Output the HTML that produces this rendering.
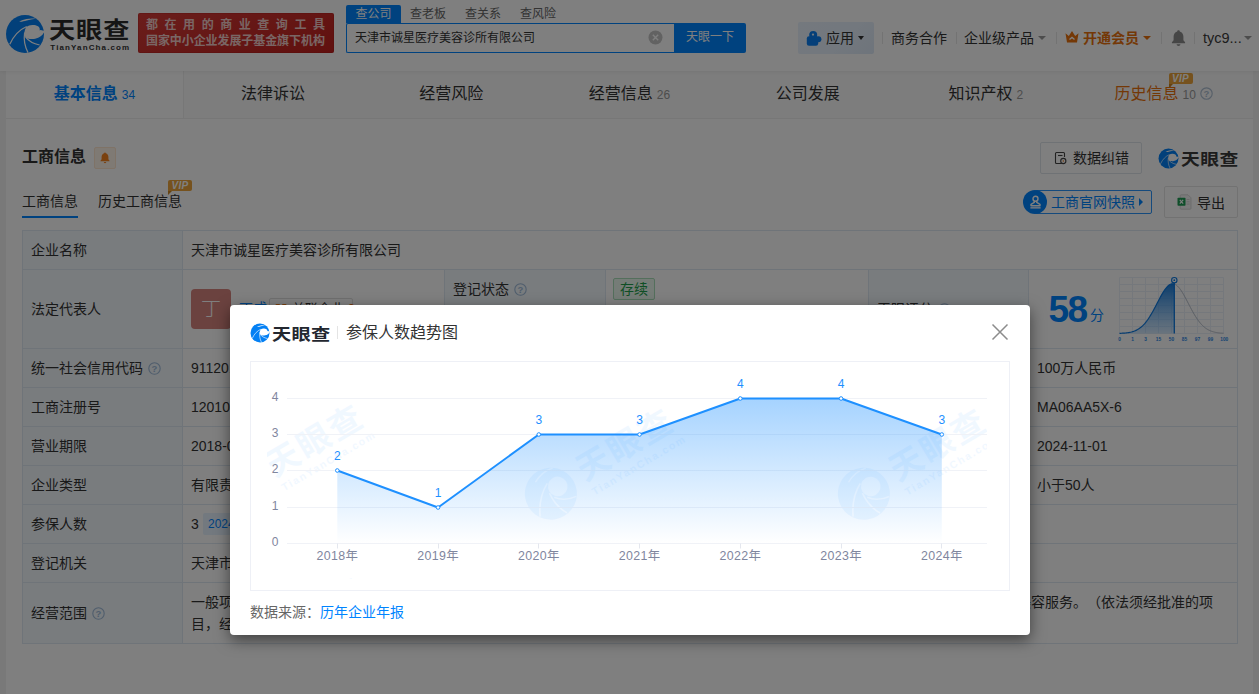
<!DOCTYPE html>
<html lang="zh-CN">
<head>
<meta charset="utf-8">
<title>天津市诚星医疗美容诊所有限公司 - 天眼查</title>
<style>
*{box-sizing:border-box;margin:0;padding:0}
html,body{width:1259px;height:694px;overflow:hidden;background:#f3f3f3;}
body{font-family:"Liberation Sans","Noto Sans CJK SC",sans-serif;color:#333;font-size:14px;position:relative}
.abs{position:absolute;white-space:nowrap}
svg{display:block}
/* header */
#hd{position:absolute;left:0;top:0;width:1259px;height:71px;background:#fff;box-shadow:0 1px 4px rgba(0,0,0,.07);z-index:2}
#hd .logo-t{left:48.500px;top:11px;font-size:22.500px;font-weight:700;color:#2b2b2b;letter-spacing:.8px;line-height:34px;font-family:"Noto Sans CJK SC",sans-serif;transform:scaleX(1.163);transform-origin:0 0}
#hd .logo-s{left:50.300px;top:41.500px;font-size:8px;font-weight:700;color:#333;letter-spacing:1.120px;line-height:12px}
#banner{left:138px;top:13px;width:196px;height:40px;background:linear-gradient(160deg,#d53c38,#c1201d);border-radius:2px;color:#f3cdca;font-weight:700;font-size:12px;box-shadow:0 0 0 1px rgba(160,20,20,.25) inset}
#banner div{position:absolute;left:8px;white-space:nowrap;line-height:16px}
.stab{top:5px;height:18px;line-height:19px;font-size:12px;color:#666}
#sinput{left:346px;top:23px;width:329px;height:30px;border:1px solid #0084ff;border-right:none;background:#fff;border-radius:2px 0 0 2px;font-size:12px;line-height:28px;padding-left:8px;color:#333}
#sbtn{left:674px;top:23px;width:72px;height:30px;background:#0084ff;color:#fff;font-size:12px;line-height:29px;text-align:center;border-radius:0 2px 2px 0}
.hsep{top:32px;width:1px;height:12px;background:#e6e6e6}
.hitem{top:27px;line-height:22px;font-size:14px;color:#333}
.caret{width:0;height:0;border-left:4px solid transparent;border-right:4px solid transparent;border-top:4px solid #999}
/* nav */
#wrap{position:absolute;left:6px;top:71px;width:1247px;height:640px;background:#fff}
.ntab{position:absolute;top:0;height:48px;width:178.140px;background:#fbfbfb;border-bottom:1px solid #efefef;text-align:center;line-height:45px;font-size:16px;color:#333;white-space:nowrap}
.ntab small{font-size:12px;color:#999;margin-left:4px}
.ntab.on{background:#fff;border-right:1px solid #efefef;color:#0084ff;font-weight:700}
.ntab.on small{color:#0084ff;font-weight:400}

.vip{width:24px;height:11px;background:#eca53c;color:#fff;font-size:10px;font-weight:700;font-style:italic;line-height:11px;text-align:center;border-radius:2px 2px 2px 0;letter-spacing:.3px;font-family:"Liberation Sans",sans-serif}
.vip:after{content:"";position:absolute;left:0;top:11px;border-top:4px solid #c98522;border-right:4px solid transparent}
.btn{border:1px solid #e4e4e4;border-radius:2px;background:#fff}
#tb{position:absolute;left:16px;top:159px;width:1216px;height:414px;background:#fff}
#tb .lb{position:absolute;background:#f2f8fd}
#tb .hl{position:absolute;left:0;width:1216px;height:1px;background:#dfe9f3}
#tb .vl{position:absolute;width:1px;background:#dfe9f3}
#tb .tx{position:absolute;white-space:nowrap;font-size:14px;line-height:22px;color:#333}
#mask{position:absolute;left:0;top:0;width:1259px;height:694px;background:rgba(0,0,0,.5);z-index:10}
#modal{position:absolute;left:230px;top:305px;width:800px;height:330px;background:#fff;border-radius:4px;box-shadow:0 5px 15px rgba(0,0,0,.5);z-index:11}
#mlogo{left:41.500px;top:13.500px;font-size:16px;font-weight:700;line-height:28px;color:#23272f;font-family:"Noto Sans CJK SC",sans-serif;letter-spacing:.3px;transform:scaleX(1.2);transform-origin:0 0}
#mtitle{left:116px;top:15.500px;font-size:16px;line-height:24px;color:#333}
#cbox{position:absolute;left:20px;top:56px;width:760px;height:230px;border:1px solid #eef0f6;overflow:hidden}
#msrc{left:20px;top:296px;font-size:14px;line-height:22px;color:#666}
#msrc span{color:#0084ff}
</style>
</head>
<body>
<div id="hd">
  <svg class="abs" style="left:5px;top:14px" width="40" height="40" viewBox="0 0 40 40"><circle cx="20" cy="20" r="19" fill="#0480f4"/><path d="M34.700 16.500 C35 14.800 34.500 13.300 33 12.300 C31.300 11.200 29.300 10.800 27.400 10.900 C25.200 11 23 11.700 21.200 12.900 C20.200 14.800 19.500 16.800 19.300 19.500 C19.300 21 19.800 22.500 20.900 23.700 C22 24.500 23.300 24.800 24.700 24.900 C26.500 25.100 28.400 25.100 30.200 24.700 C32.300 24.300 34.200 23.500 35.700 22.300 C37 21.300 38.100 20.200 38.800 18.800 L39.600 17 L35.600 16 Z" fill="#fff"/><path d="M21.700 12.500 C14.800 15.500 8.800 21.500 4.800 30.200" stroke="#fff" stroke-width="1.250" fill="none"/><path d="M19.600 18.500 C18.600 25.500 19.800 32.500 23 38.600" stroke="#fff" stroke-width="1.250" fill="none"/><path d="M20.600 23.200 C23.500 27 28.500 29.800 34.600 31" stroke="#fff" stroke-width="1.250" fill="none"/><path d="M14.200 7.700 C16.500 6.300 19 5.400 21.500 4.900 C24.500 4.300 27.800 4.200 30.800 4.700 C27.500 5.200 24.500 5.700 21.800 6.500 C19 7.200 16.500 8 14.200 7.700Z" fill="#fff"/></svg>
  <div class="abs logo-t">天眼查</div>
  <div class="abs logo-s">TianYanCha.com</div>
  <div class="abs" id="banner">
    <div style="top:4px;letter-spacing:6.550px">都在用的商业查询工具</div>
    <div style="top:19.700px;letter-spacing:-.08px">国家中小企业发展子基金旗下机构</div>
  </div>
  <div class="abs stab" style="left:346px;width:55px;background:#0084ff;color:#fff;text-align:center;font-size:12px;border-radius:2px 2px 0 0">查公司</div>
  <div class="abs stab" style="left:410px">查老板</div>
  <div class="abs stab" style="left:465px">查关系</div>
  <div class="abs stab" style="left:520px">查风险</div>
  <div class="abs" id="sinput">天津市诚星医疗美容诊所有限公司</div>
  <svg class="abs" style="left:648px;top:30px" width="15" height="15" viewBox="0 0 15 15"><circle cx="7.5" cy="7.5" r="7" fill="#c4c4c4"/><path d="M4.8 4.8l5.4 5.4M10.2 4.8l-5.4 5.4" stroke="#fff" stroke-width="1.4"/></svg>
  <div class="abs" id="sbtn">天眼一下</div>

  <div class="abs" style="left:798px;top:22px;width:76px;height:32px;background:linear-gradient(135deg,#e9f2fd 0%,#e6f0fc 60%,#dde9f7 100%);border-radius:2px"></div>
  <svg class="abs" style="left:806px;top:30px" width="16" height="17" viewBox="0 0 16 17"><rect x=".8" y="6.200" width="11.400" height="9.600" rx="2.200" fill="#0a7ff2"/><circle cx="7.200" cy="5" r="4" fill="#0a7ff2"/><circle cx="12.400" cy="9.300" r="3" fill="#0a7ff2"/><circle cx="7" cy="4.600" r="1.150" fill="#e8f2fd"/><circle cx="3.400" cy="12.200" r="1.300" fill="#e8f2fd" opacity=".0"/></svg>
  <div class="abs hitem" style="left:826px;font-size:14px">应用</div>
  <div class="abs caret" style="left:858px;top:36px;border-top-color:#333;border-left-width:3.500px;border-right-width:3.500px"></div>
  <div class="abs hsep" style="left:882px"></div>
  <div class="abs hitem" style="left:891px">商务合作</div>
  <div class="abs hsep" style="left:956px"></div>
  <div class="abs hitem" style="left:964px">企业级产品</div>
  <div class="abs caret" style="left:1038px;top:36px"></div>
  <div class="abs hsep" style="left:1056px"></div>
  <svg class="abs" style="left:1065px;top:30px" width="14" height="14" viewBox="0 0 14 14"><path d="M0.5 3.2 L3.8 6 L7 1 L10.2 6 L13.5 3.2 L12 12.5 H2 Z" fill="#e8710d"/><path d="M4.5 9.6 L7 7.4 L9.5 9.6" stroke="#fff" stroke-width="1.3" fill="none"/></svg>
  <div class="abs hitem" style="left:1083px;color:#e8710d;font-weight:700">开通会员</div>
  <div class="abs caret" style="left:1143px;top:36px;border-top-color:#e8710d"></div>
  <div class="abs hsep" style="left:1161px"></div>
  <svg class="abs" style="left:1171px;top:29px" width="15" height="18" viewBox="0 0 15 18"><path d="M7.5 1.2c-.8 0-1.3.5-1.3 1.2C3.8 3.1 2.6 5.2 2.6 7.6v3.6L.9 13.3v.9h13.2v-.9l-1.7-2.1V7.6c0-2.4-1.2-4.5-3.6-5.2 0-.7-.5-1.2-1.3-1.2z" fill="#8d8d8d"/><path d="M5.6 15.3h3.8c0 1-.9 1.7-1.9 1.7s-1.9-.7-1.9-1.7z" fill="#8d8d8d"/></svg>
  <div class="abs hsep" style="left:1194px"></div>
  <div class="abs hitem" style="left:1203px;color:#3a3a3a;font-size:14.500px">tyc9...</div>
  <div class="abs caret" style="left:1244px;top:36px"></div>
</div>


<div id="wrap">

  <div class="ntab on" style="left:0;width:178px">基本信息<small>34</small></div>
  <div class="ntab" style="left:178px">法律诉讼</div>
  <div class="ntab" style="left:356.3px">经营风险</div>
  <div class="ntab" style="left:534.4px">经营信息<small>26</small></div>
  <div class="ntab" style="left:712.6px">公司发展</div>
  <div class="ntab" style="left:890.7px">知识产权<small>2</small></div>
  <div class="ntab" style="left:1068.8px;width:178.2px;color:#e8710d">历史信息<small>10</small><svg style="display:inline-block;vertical-align:-1px;margin-left:4.500px" width="13" height="13" viewBox="0 0 13 13"><circle cx="6.500" cy="6.500" r="5.700" fill="none" stroke="#aebfd2" stroke-width="1.150"/><text x="6.500" y="9.800" font-size="9.500" font-weight="700" text-anchor="middle" fill="#aebfd2" font-family="Liberation Sans,sans-serif">?</text></svg></div>
  <!-- section head (coords relative to #wrap: x-6, y-71) -->
  <div class="abs" style="left:16px;top:74px;font-size:16px;font-weight:700;line-height:24px;color:#333">工商信息</div>
  <div class="abs" style="left:88px;top:76px;width:22px;height:22px;background:#fff4e8;border:1px solid #ffe6cf;border-radius:2px"></div>
  <svg class="abs" style="left:94px;top:81px" width="10" height="12" viewBox="0 0 10 12"><path d="M5 .6c-.5 0-.8.3-.8.7C2.500 1.800 1.600 3.300 1.600 5v2.300L.5 8.700v.6h9v-.6L8.400 7.300V5c0-1.700-.9-3.200-2.600-3.700 0-.4-.3-.7-.8-.7z" fill="#f5821f"/><path d="M3.800 10.100h2.400c0 .7-.5 1.200-1.200 1.200s-1.200-.5-1.200-1.200z" fill="#f5821f"/></svg>
  <div class="abs" style="left:16px;top:119px;font-size:14px;line-height:22px;color:#333">工商信息</div>
  <div class="abs" style="left:16px;top:145px;width:56px;height:2px;background:#0084ff"></div>
  <div class="abs" style="left:92px;top:119px;font-size:14px;line-height:22px;color:#333">历史工商信息</div>
  <div class="abs vip" style="left:162px;top:109px">VIP</div>
  <div class="abs vip" style="left:1162.500px;top:1.500px">VIP</div>

  <div class="abs btn" style="left:1034px;top:71px;width:102px;height:32px;border-color:#dfe4ea"></div>
  <svg class="abs" style="left:1048px;top:80px" width="13" height="14" viewBox="0 0 13 14"><path d="M8.500 12.500H2.500a1 1 0 0 1-1-1V2.500a1 1 0 0 1 1-1h7a1 1 0 0 1 1 1V6" fill="none" stroke="#444" stroke-width="1.100"/><path d="M4 4.500h4.500" stroke="#444" stroke-width="1.100"/><circle cx="9.300" cy="10" r="2.600" fill="#fff" stroke="#444" stroke-width="1.100"/><circle cx="9.300" cy="10" r=".7" fill="#e8710d"/></svg>
  <div class="abs" style="left:1067px;top:76px;font-size:14px;line-height:22px;color:#333">数据纠错</div>
  <svg class="abs" style="left:1152px;top:77px" width="21" height="21" viewBox="0 0 40 40"><circle cx="20" cy="20" r="19" fill="#0480f4"/><path d="M34.700 16.500 C35 14.800 34.500 13.300 33 12.300 C31.300 11.200 29.300 10.800 27.400 10.900 C25.200 11 23 11.700 21.200 12.900 C20.200 14.800 19.500 16.800 19.300 19.500 C19.300 21 19.800 22.500 20.900 23.700 C22 24.500 23.300 24.800 24.700 24.900 C26.500 25.100 28.400 25.100 30.200 24.700 C32.300 24.300 34.200 23.500 35.700 22.300 C37 21.300 38.100 20.200 38.800 18.800 L39.600 17 L35.600 16 Z" fill="#fff"/><path d="M21.700 12.500 C14.800 15.500 8.800 21.500 4.800 30.200" stroke="#fff" stroke-width="1.250" fill="none"/><path d="M19.600 18.500 C18.600 25.500 19.800 32.500 23 38.600" stroke="#fff" stroke-width="1.250" fill="none"/><path d="M20.600 23.200 C23.500 27 28.500 29.800 34.600 31" stroke="#fff" stroke-width="1.250" fill="none"/><path d="M14.200 7.700 C16.500 6.300 19 5.400 21.500 4.900 C24.500 4.300 27.800 4.200 30.800 4.700 C27.500 5.200 24.500 5.700 21.800 6.500 C19 7.200 16.500 8 14.200 7.700Z" fill="#fff"/></svg>
  <div class="abs" style="left:1174.500px;top:73px;font-size:16px;font-weight:700;line-height:28px;color:#3a3a3a;font-family:'Noto Sans CJK SC',sans-serif;letter-spacing:.4px;transform:scaleX(1.175);transform-origin:0 0">天眼查</div>

  <div class="abs" style="left:1029px;top:119px;width:117px;height:24px;border:1px solid #2b95fb;border-radius:2px;background:#fff"></div>
  <div class="abs" style="left:1017px;top:119px;width:24px;height:24px;border-radius:50%;background:#0084ff"></div>
  <svg class="abs" style="left:1022.500px;top:123.500px" width="13" height="14" viewBox="0 0 13 14"><circle cx="6.500" cy="3.700" r="2.500" fill="none" stroke="#fff" stroke-width="1.400"/><path d="M5.300 6v1.400L2 9.300v1.500h9V9.300L7.700 7.400V6" fill="none" stroke="#fff" stroke-width="1.400" stroke-linejoin="round"/><path d="M1.400 12.800h10.200" stroke="#cfe5ff" stroke-width="1.700"/></svg>
  <div class="abs" style="left:1045px;top:120px;font-size:14px;line-height:22px;color:#0084ff">工商官网快照</div>
  <div class="abs" style="left:1133px;top:127px;width:0;height:0;border-top:4px solid transparent;border-bottom:4px solid transparent;border-left:4.500px solid #0084ff"></div>
  <div class="abs btn" style="left:1158px;top:115px;width:74px;height:32px"></div>
  <svg class="abs" style="left:1171px;top:123px" width="15" height="16" viewBox="0 0 15 16"><path d="M4 .8h7l3 3v10.600a.8.8 0 0 1-.8.800H4a.8.8 0 0 1-.8-.800V1.600A.8.8 0 0 1 4 .8z" fill="#f4f4f4" stroke="#cfcfcf" stroke-width=".8"/><path d="M9.500 5.500h3M9.500 7.800h3M9.500 10.100h3" stroke="#d0d0d0" stroke-width=".9"/><rect x=".5" y="3.800" width="8" height="8" rx=".8" fill="#1f9d55"/><path d="M2.800 5.900l3.400 3.800M6.200 5.900L2.800 9.700" stroke="#fff" stroke-width="1.200"/></svg>
  <div class="abs" style="left:1191px;top:120.500px;font-size:14px;line-height:22px;color:#333">导出</div>
  <!-- table: page x 22..1237, y 230..643 ; relative to wrap: left 16, top 159 -->
  <div id="tb">
    <!-- label column backgrounds -->
    <div class="lb" style="left:0;top:0;width:160px;height:413px"></div>
    <div class="lb" style="left:422px;top:39px;width:161px;height:313px"></div>
    <div class="lb" style="left:846px;top:39px;width:161px;height:235px"></div>
    <!-- horizontal lines -->
    <div class="hl" style="top:0"></div>
    <div class="hl" style="top:39px"></div>
    <div class="hl" style="top:78px;left:422px;width:424px"></div>
    <div class="hl" style="top:118px"></div>
    <div class="hl" style="top:157px"></div>
    <div class="hl" style="top:196px"></div>
    <div class="hl" style="top:235px"></div>
    <div class="hl" style="top:274px"></div>
    <div class="hl" style="top:313px"></div>
    <div class="hl" style="top:352px"></div>
    <div class="hl" style="top:413px"></div>
    <!-- vertical lines -->
    <div class="vl" style="left:0;top:0;height:414px"></div>
    <div class="vl" style="left:160px;top:0;height:414px"></div>
    <div class="vl" style="left:422px;top:39px;height:313px"></div>
    <div class="vl" style="left:583px;top:39px;height:313px"></div>
    <div class="vl" style="left:846px;top:39px;height:235px"></div>
    <div class="vl" style="left:1006px;top:39px;height:235px"></div>
    <div class="vl" style="left:1215px;top:0;height:414px"></div>
    <!-- labels col 1 -->
    <div class="tx" style="left:9px;top:9px">企业名称</div>
    <div class="tx" style="left:9px;top:68px">法定代表人</div>
    <div class="tx" style="left:9px;top:127px">统一社会信用代码</div>
    <svg class="abs q" style="left:126px;top:132px" width="13" height="13" viewBox="0 0 13 13"><circle cx="6.500" cy="6.500" r="5.700" fill="none" stroke="#9fbbd9" stroke-width="1.100"/><text x="6.500" y="9.800" font-size="9.500" font-weight="700" text-anchor="middle" fill="#9fbbd9" font-family="Liberation Sans,sans-serif">?</text></svg>
    <div class="tx" style="left:9px;top:166px">工商注册号</div>
    <div class="tx" style="left:9px;top:205px">营业期限</div>
    <div class="tx" style="left:9px;top:244px">企业类型</div>
    <div class="tx" style="left:9px;top:283px">参保人数</div>
    <div class="tx" style="left:9px;top:322px">登记机关</div>
    <div class="tx" style="left:9px;top:372px">经营范围</div>
    <svg class="abs q" style="left:70px;top:377px" width="13" height="13" viewBox="0 0 13 13"><circle cx="6.500" cy="6.500" r="5.700" fill="none" stroke="#9fbbd9" stroke-width="1.100"/><text x="6.500" y="9.800" font-size="9.500" font-weight="700" text-anchor="middle" fill="#9fbbd9" font-family="Liberation Sans,sans-serif">?</text></svg>
    <!-- values col 1 -->
    <div class="tx" style="left:169px;top:9px">天津市诚星医疗美容诊所有限公司</div>
    <div class="abs" style="left:169px;top:59px;width:40px;height:40px;border-radius:4px;background:#d7847f;color:#fff;font-size:20px;line-height:40px;text-align:center;font-weight:300">丁</div>
    <div class="tx" style="left:217px;top:67px;color:#0084ff">丁戌</div>
    <div class="abs" style="left:247px;top:68px;width:84px;height:22px;border:1px solid #e0e0e0;border-radius:2px;font-size:13px;line-height:20px;color:#333;padding-left:22px">关联企业 <span style="color:#e8710d">3</span></div>
    <svg class="abs" style="left:253px;top:73px" width="12" height="12" viewBox="0 0 12 12"><rect x=".5" y="1" width="4.500" height="4.500" rx="1" fill="#f5821f"/><rect x="7" y="1" width="4.500" height="4.500" rx="1" fill="#f5821f"/><rect x="3.700" y="7" width="4.500" height="4.500" rx="1" fill="#f5821f"/></svg>
    <div class="tx" style="left:169px;top:127px">91120116MA06AA5X65</div>
    <div class="tx" style="left:169px;top:166px">120104000409843</div>
    <div class="tx" style="left:169px;top:205px">2018-03-19 至 2048-03-18</div>
    <div class="tx" style="left:169px;top:244px">有限责任公司</div>
    <div class="tx" style="left:169px;top:283px">3</div>
    <div class="abs" style="left:181px;top:283px;height:22px;padding:0 5px;background:#e6f2ff;color:#0084ff;font-size:12px;line-height:22px;border-radius:2px">2024年报</div>
    <div class="tx" style="left:169px;top:322px">天津市滨海新区市场监督管理局</div>
    <div class="tx" style="left:169px;top:361px;white-space:nowrap;width:1030px;line-height:22px;text-spacing-trim:space-all;overflow:hidden">一般项目：医疗美容服务；第一类医疗器械销售；第二类医疗器械销售；化妆品零售；化妆品批发；健康咨询（不含诊疗服务）；生活美容服务。（依法须经批准的项<br>目，经相关部门批准后方可开展经营活动，具体经营项目以相关部门批准文件或许可证件为准）</div>
    <!-- col 2 -->
    <div class="tx" style="left:431px;top:48px">登记状态</div>
    <svg class="abs q" style="left:492px;top:53px" width="13" height="13" viewBox="0 0 13 13"><circle cx="6.500" cy="6.500" r="5.700" fill="none" stroke="#9fbbd9" stroke-width="1.100"/><text x="6.500" y="9.800" font-size="9.500" font-weight="700" text-anchor="middle" fill="#9fbbd9" font-family="Liberation Sans,sans-serif">?</text></svg>
    <div class="abs" style="left:591px;top:48px;width:42px;height:22px;border:1px solid #a9dfb9;background:#eaf8ee;color:#1e9e4a;font-size:14px;line-height:20px;text-align:center;border-radius:2px">存续</div>
    <div class="tx" style="left:431px;top:87px">成立日期</div>
    <div class="tx" style="left:431px;top:127px">注册资本</div>
    <div class="tx" style="left:431px;top:166px">纳税人识别号</div>
    <div class="tx" style="left:431px;top:205px">纳税人资质</div>
    <div class="tx" style="left:431px;top:244px">行业</div>
    <div class="tx" style="left:431px;top:283px">英文名称</div>
    <div class="tx" style="left:431px;top:322px">注册地址</div>
    <!-- col 3 -->
    <div class="tx" style="left:855px;top:68px">天眼评分</div>
    <svg class="abs q" style="left:916px;top:73px" width="13" height="13" viewBox="0 0 13 13"><circle cx="6.500" cy="6.500" r="5.700" fill="none" stroke="#9fbbd9" stroke-width="1.100"/><text x="6.500" y="9.800" font-size="9.500" font-weight="700" text-anchor="middle" fill="#9fbbd9" font-family="Liberation Sans,sans-serif">?</text></svg>
    <div class="tx" style="left:855px;top:127px">实缴资本</div>
    <div class="tx" style="left:855px;top:166px">组织机构代码</div>
    <div class="tx" style="left:855px;top:205px">核准日期</div>
    <div class="tx" style="left:855px;top:244px">人员规模</div>
    <div class="tx" style="left:1015px;top:127px">100万人民币</div>
    <div class="tx" style="left:1015px;top:166px">MA06AA5X-6</div>
    <div class="tx" style="left:1015px;top:205px">2024-11-01</div>
    <div class="tx" style="left:1015px;top:244px">小于50人</div>
    <!-- score -->
    <div class="abs" style="left:1026.500px;top:56.500px;font-size:37px;font-weight:700;color:#0084ff;line-height:46px;font-family:'Liberation Sans',sans-serif;letter-spacing:-1.500px">58</div>
    <div class="abs" style="left:1068px;top:76px;font-size:14px;color:#0084ff;line-height:18px">分</div>
<!--SC0-->
    <svg class="abs" style="left:1090px;top:42px" width="122" height="74" viewBox="0 0 122 74">
      <linearGradient id="sg" x1="0" y1="0" x2="0" y2="1"><stop offset="0" stop-color="#0b73d6" stop-opacity=".95"/><stop offset="1" stop-color="#3b97ee" stop-opacity=".22"/></linearGradient>
      <path d="M7.5 5.5V61.5M20.5 5.5V61.5M33.5 5.5V61.5M46.5 5.5V61.5M59.5 5.5V61.5M72.5 5.5V61.5M85.5 5.5V61.5M98.5 5.5V61.5M111.5 5.5V61.5M7.5 5.5H111.5M7.5 12.5H111.5M7.5 19.5H111.5M7.5 26.5H111.5M7.5 33.5H111.5M7.5 40.5H111.5M7.5 47.5H111.5M7.5 54.5H111.5M7.5 61.5H111.5" stroke="#eaf0f8" stroke-width="1" fill="none"/>
      <path d="M62.3 12.06 L62.5 12.13 L63.5 12.59 L64.5 13.25 L65.5 14.1 L66.5 15.12 L67.5 16.3 L68.5 17.64 L69.5 19.11 L70.5 20.7 L71.5 22.39 L72.5 24.17 L73.5 26.01 L74.5 27.89 L75.5 29.81 L76.5 31.74 L77.5 33.67 L78.5 35.58 L79.5 37.46 L80.5 39.29 L81.5 41.07 L82.5 42.78 L83.5 44.42 L84.5 45.98 L85.5 47.45 L86.5 48.84 L87.5 50.14 L88.5 51.34 L89.5 52.46 L90.5 53.48 L91.5 54.42 L92.5 55.28 L93.5 56.05 L94.5 56.75 L95.5 57.37 L96.5 57.93 L97.5 58.42 L98.5 58.86 L99.5 59.25 L100.5 59.58 L101.5 59.87 L102.5 60.13 L103.5 60.35 L104.5 60.53 L105.5 60.7 L106.5 60.83 L107.5 60.95 L108.5 61.05 L109.5 61.13 L110.5 61.2 L111.5 61.25" stroke="#b4bcc8" stroke-width="1" fill="none"/>
      <path d="M7.5 61.35 L8.5 61.32 L9.5 61.27 L10.5 61.22 L11.5 61.16 L12.5 61.08 L13.5 60.99 L14.5 60.88 L15.5 60.75 L16.5 60.6 L17.5 60.43 L18.5 60.22 L19.5 59.98 L20.5 59.7 L21.5 59.39 L22.5 59.02 L23.5 58.61 L24.5 58.13 L25.5 57.6 L26.5 57.01 L27.5 56.34 L28.5 55.6 L29.5 54.77 L30.5 53.87 L31.5 52.88 L32.5 51.8 L33.5 50.63 L34.5 49.37 L35.5 48.02 L36.5 46.58 L37.5 45.05 L38.5 43.44 L39.5 41.76 L40.5 40.01 L41.5 38.2 L42.5 36.34 L43.5 34.44 L44.5 32.51 L45.5 30.58 L46.5 28.66 L47.5 26.76 L48.5 24.89 L49.5 23.09 L50.5 21.37 L51.5 19.73 L52.5 18.21 L53.5 16.82 L54.5 15.57 L55.5 14.49 L56.5 13.57 L57.5 12.83 L58.5 12.29 L59.5 11.95 L60.5 11.8 L61.5 11.87 L62.3 12.06 L62.3 61.5 L7.5 61.5 Z" fill="url(#sg)"/>
      <path d="M7.5 61.35 L8.5 61.32 L9.5 61.27 L10.5 61.22 L11.5 61.16 L12.5 61.08 L13.5 60.99 L14.5 60.88 L15.5 60.75 L16.5 60.6 L17.5 60.43 L18.5 60.22 L19.5 59.98 L20.5 59.7 L21.5 59.39 L22.5 59.02 L23.5 58.61 L24.5 58.13 L25.5 57.6 L26.5 57.01 L27.5 56.34 L28.5 55.6 L29.5 54.77 L30.5 53.87 L31.5 52.88 L32.5 51.8 L33.5 50.63 L34.5 49.37 L35.5 48.02 L36.5 46.58 L37.5 45.05 L38.5 43.44 L39.5 41.76 L40.5 40.01 L41.5 38.2 L42.5 36.34 L43.5 34.44 L44.5 32.51 L45.5 30.58 L46.5 28.66 L47.5 26.76 L48.5 24.89 L49.5 23.09 L50.5 21.37 L51.5 19.73 L52.5 18.21 L53.5 16.82 L54.5 15.57 L55.5 14.49 L56.5 13.57 L57.5 12.83 L58.5 12.29 L59.5 11.95 L60.5 11.8 L61.5 11.87 L62.3 12.06" stroke="#0b78e0" stroke-width="1.200" fill="none"/>
      <path d="M62.3 9V61.5" stroke="#0b78e0" stroke-width="1.300"/>
      <circle cx="62.3" cy="8.2" r="2.700" fill="#fff" stroke="#0b78e0" stroke-width="1.100"/><circle cx="62.3" cy="8.2" r=".9" fill="#0b78e0"/>
      <text x="7.5" y="69" font-size="4.800" font-weight="700" fill="#2b86e6" text-anchor="middle" font-family="Liberation Sans,sans-serif">0</text>
      <text x="20.5" y="69" font-size="4.800" font-weight="700" fill="#2b86e6" text-anchor="middle" font-family="Liberation Sans,sans-serif">1</text>
      <text x="33.5" y="69" font-size="4.800" font-weight="700" fill="#2b86e6" text-anchor="middle" font-family="Liberation Sans,sans-serif">3</text>
      <text x="46.5" y="69" font-size="4.800" font-weight="700" fill="#2b86e6" text-anchor="middle" font-family="Liberation Sans,sans-serif">15</text>
      <text x="59.5" y="69" font-size="4.800" font-weight="700" fill="#2b86e6" text-anchor="middle" font-family="Liberation Sans,sans-serif">50</text>
      <text x="72.5" y="69" font-size="4.800" font-weight="700" fill="#2b86e6" text-anchor="middle" font-family="Liberation Sans,sans-serif">85</text>
      <text x="85.5" y="69" font-size="4.800" font-weight="700" fill="#2b86e6" text-anchor="middle" font-family="Liberation Sans,sans-serif">97</text>
      <text x="98.5" y="69" font-size="4.800" font-weight="700" fill="#2b86e6" text-anchor="middle" font-family="Liberation Sans,sans-serif">99</text>
      <text x="112.3" y="69" font-size="4.800" font-weight="700" fill="#2b86e6" text-anchor="middle" font-family="Liberation Sans,sans-serif">100</text>
    </svg>
<!--SC1-->
  </div>

</div>
<div id="mask"></div>
<div id="modal">
  <svg class="abs" style="left:19.500px;top:18px" width="20" height="20" viewBox="0 0 40 40"><circle cx="20" cy="20" r="19" fill="#0480f4"/><path d="M34.700 16.500 C35 14.800 34.500 13.300 33 12.300 C31.300 11.200 29.300 10.800 27.400 10.900 C25.200 11 23 11.700 21.200 12.900 C20.200 14.800 19.500 16.800 19.300 19.500 C19.300 21 19.800 22.500 20.900 23.700 C22 24.500 23.300 24.800 24.700 24.900 C26.500 25.100 28.400 25.100 30.200 24.700 C32.300 24.300 34.200 23.500 35.700 22.300 C37 21.300 38.100 20.200 38.800 18.800 L39.600 17 L35.600 16 Z" fill="#fff"/><path d="M21.700 12.500 C14.800 15.500 8.800 21.500 4.800 30.200" stroke="#fff" stroke-width="1.250" fill="none"/><path d="M19.600 18.500 C18.600 25.500 19.800 32.500 23 38.600" stroke="#fff" stroke-width="1.250" fill="none"/><path d="M20.600 23.200 C23.500 27 28.500 29.800 34.600 31" stroke="#fff" stroke-width="1.250" fill="none"/><path d="M14.200 7.700 C16.500 6.300 19 5.400 21.500 4.900 C24.500 4.300 27.800 4.200 30.800 4.700 C27.500 5.200 24.500 5.700 21.800 6.500 C19 7.200 16.500 8 14.200 7.700Z" fill="#fff"/></svg>
  <div class="abs" id="mlogo">天眼查</div>
  <div class="abs" style="left:107px;top:21px;width:1px;height:13px;background:#e4e4e4"></div>
  <div class="abs" id="mtitle">参保人数趋势图</div>
  <svg class="abs" style="left:761px;top:18px" width="18" height="18" viewBox="0 0 18 18"><path d="M1.500 1.500l15 15M16.500 1.500l-15 15" stroke="#8c8c8c" stroke-width="1.500" fill="none"/></svg>
  <div id="cbox">
  <svg width="758" height="227" viewBox="0 0 758 227" style="position:absolute;left:0;top:0;font-family:'Liberation Sans','Noto Sans CJK SC',sans-serif">
    <clipPath id="wmclip"><rect x="16" y="7" width="720" height="210"/></clipPath>
    <linearGradient id="ag" x1="0" y1="0" x2="0" y2="1"><stop offset="0" stop-color="#1e90ff" stop-opacity=".40"/><stop offset="1" stop-color="#1e90ff" stop-opacity="0"/></linearGradient>
    <g clip-path="url(#wmclip)">
    <g transform="translate(62.5 78.5) rotate(-30.500)" opacity=".06"><circle cx="-87.600" cy="5.200" r="26" fill="#1e90ff"/><circle cx="-78" cy="2.500" r="9.800" fill="#fff"/><path d="M-85.500 -5.500C-95 -.5 -103 8 -108.500 19.500" stroke="#fff" stroke-width="1.600" fill="none"/><path d="M-88.500 4C-89.500 13 -88 22 -83.500 30" stroke="#fff" stroke-width="1.600" fill="none"/><path d="M-86.500 10C-82.500 15.500 -75 19.500 -67 20.500" stroke="#fff" stroke-width="1.600" fill="none"/><path d="M-95 -12.500C-88 -16.500 -80 -17.500 -73 -16" stroke="#fff" stroke-width="1.400" fill="none"/><text x="-52.300 -16.500 19.300" y="12.300" font-size="33" font-weight="700" fill="#1e90ff" font-family="Noto Sans CJK SC,sans-serif">天眼查</text><text x="2" y="29" font-size="10.500" font-weight="700" fill="#1e90ff" text-anchor="middle" textLength="106" lengthAdjust="spacing">TianYanCha.com</text></g>
    <g transform="translate(372.7 82.7) rotate(-30.500)" opacity=".06"><circle cx="-87.600" cy="5.200" r="26" fill="#1e90ff"/><circle cx="-78" cy="2.500" r="9.800" fill="#fff"/><path d="M-85.500 -5.500C-95 -.5 -103 8 -108.500 19.500" stroke="#fff" stroke-width="1.600" fill="none"/><path d="M-88.500 4C-89.500 13 -88 22 -83.500 30" stroke="#fff" stroke-width="1.600" fill="none"/><path d="M-86.500 10C-82.500 15.500 -75 19.500 -67 20.500" stroke="#fff" stroke-width="1.600" fill="none"/><path d="M-95 -12.500C-88 -16.500 -80 -17.500 -73 -16" stroke="#fff" stroke-width="1.400" fill="none"/><text x="-52.300 -16.500 19.300" y="12.300" font-size="33" font-weight="700" fill="#1e90ff" font-family="Noto Sans CJK SC,sans-serif">天眼查</text><text x="2" y="29" font-size="10.500" font-weight="700" fill="#1e90ff" text-anchor="middle" textLength="106" lengthAdjust="spacing">TianYanCha.com</text></g>
    <g transform="translate(685.7 82.8) rotate(-30.500)" opacity=".06"><circle cx="-87.600" cy="5.200" r="26" fill="#1e90ff"/><circle cx="-78" cy="2.500" r="9.800" fill="#fff"/><path d="M-85.500 -5.500C-95 -.5 -103 8 -108.500 19.500" stroke="#fff" stroke-width="1.600" fill="none"/><path d="M-88.500 4C-89.500 13 -88 22 -83.500 30" stroke="#fff" stroke-width="1.600" fill="none"/><path d="M-86.500 10C-82.500 15.500 -75 19.500 -67 20.500" stroke="#fff" stroke-width="1.600" fill="none"/><path d="M-95 -12.500C-88 -16.500 -80 -17.500 -73 -16" stroke="#fff" stroke-width="1.400" fill="none"/><text x="-52.300 -16.500 19.300" y="12.300" font-size="33" font-weight="700" fill="#1e90ff" font-family="Noto Sans CJK SC,sans-serif">天眼查</text><text x="2" y="29" font-size="10.500" font-weight="700" fill="#1e90ff" text-anchor="middle" textLength="106" lengthAdjust="spacing">TianYanCha.com</text></g>
    <g transform="translate(62.5 252) rotate(-30.500)" opacity=".06"><circle cx="-87.600" cy="5.200" r="26" fill="#1e90ff"/><circle cx="-78" cy="2.500" r="9.800" fill="#fff"/><path d="M-85.500 -5.500C-95 -.5 -103 8 -108.500 19.500" stroke="#fff" stroke-width="1.600" fill="none"/><path d="M-88.500 4C-89.500 13 -88 22 -83.500 30" stroke="#fff" stroke-width="1.600" fill="none"/><path d="M-86.500 10C-82.500 15.500 -75 19.500 -67 20.500" stroke="#fff" stroke-width="1.600" fill="none"/><path d="M-95 -12.500C-88 -16.500 -80 -17.500 -73 -16" stroke="#fff" stroke-width="1.400" fill="none"/><text x="-52.300 -16.500 19.300" y="12.300" font-size="33" font-weight="700" fill="#1e90ff" font-family="Noto Sans CJK SC,sans-serif">天眼查</text><text x="2" y="29" font-size="10.500" font-weight="700" fill="#1e90ff" text-anchor="middle" textLength="106" lengthAdjust="spacing">TianYanCha.com</text></g>
    <g transform="translate(373 256) rotate(-30.500)" opacity=".06"><circle cx="-87.600" cy="5.200" r="26" fill="#1e90ff"/><circle cx="-78" cy="2.500" r="9.800" fill="#fff"/><path d="M-85.500 -5.500C-95 -.5 -103 8 -108.500 19.500" stroke="#fff" stroke-width="1.600" fill="none"/><path d="M-88.500 4C-89.500 13 -88 22 -83.500 30" stroke="#fff" stroke-width="1.600" fill="none"/><path d="M-86.500 10C-82.500 15.500 -75 19.500 -67 20.500" stroke="#fff" stroke-width="1.600" fill="none"/><path d="M-95 -12.500C-88 -16.500 -80 -17.500 -73 -16" stroke="#fff" stroke-width="1.400" fill="none"/><text x="-52.300 -16.500 19.300" y="12.300" font-size="33" font-weight="700" fill="#1e90ff" font-family="Noto Sans CJK SC,sans-serif">天眼查</text><text x="2" y="29" font-size="10.500" font-weight="700" fill="#1e90ff" text-anchor="middle" textLength="106" lengthAdjust="spacing">TianYanCha.com</text></g>
    <g transform="translate(686 256) rotate(-30.500)" opacity=".06"><circle cx="-87.600" cy="5.200" r="26" fill="#1e90ff"/><circle cx="-78" cy="2.500" r="9.800" fill="#fff"/><path d="M-85.500 -5.500C-95 -.5 -103 8 -108.500 19.500" stroke="#fff" stroke-width="1.600" fill="none"/><path d="M-88.500 4C-89.500 13 -88 22 -83.500 30" stroke="#fff" stroke-width="1.600" fill="none"/><path d="M-86.500 10C-82.500 15.500 -75 19.500 -67 20.500" stroke="#fff" stroke-width="1.600" fill="none"/><path d="M-95 -12.500C-88 -16.500 -80 -17.500 -73 -16" stroke="#fff" stroke-width="1.400" fill="none"/><text x="-52.300 -16.500 19.300" y="12.300" font-size="33" font-weight="700" fill="#1e90ff" font-family="Noto Sans CJK SC,sans-serif">天眼查</text><text x="2" y="29" font-size="10.500" font-weight="700" fill="#1e90ff" text-anchor="middle" textLength="106" lengthAdjust="spacing">TianYanCha.com</text></g>
    </g>
    <path d="M36 36.5H736" stroke="#f0f2f7" stroke-width="1"/>
    <text x="27.5" y="39.0" font-size="12" fill="#7f869e" text-anchor="end">4</text>
    <path d="M36 72.5H736" stroke="#f0f2f7" stroke-width="1"/>
    <text x="27.5" y="75.0" font-size="12" fill="#7f869e" text-anchor="end">3</text>
    <path d="M36 108.5H736" stroke="#f0f2f7" stroke-width="1"/>
    <text x="27.5" y="111.0" font-size="12" fill="#7f869e" text-anchor="end">2</text>
    <path d="M36 145.5H736" stroke="#f0f2f7" stroke-width="1"/>
    <text x="27.5" y="148.0" font-size="12" fill="#7f869e" text-anchor="end">1</text>
    <path d="M36 181.5H736" stroke="#f0f2f7" stroke-width="1"/>
    <text x="27.5" y="184.0" font-size="12" fill="#7f869e" text-anchor="end">0</text>
    <path d="M86.5 181.5v5" stroke="#e4e7ee" stroke-width="1"/>
    <text x="86.3" y="197.8" font-size="12.400" letter-spacing=".35" fill="#7f869e" text-anchor="middle">2018年</text>
    <path d="M187.5 181.5v5" stroke="#e4e7ee" stroke-width="1"/>
    <text x="187.05" y="197.8" font-size="12.400" letter-spacing=".35" fill="#7f869e" text-anchor="middle">2019年</text>
    <path d="M287.5 181.5v5" stroke="#e4e7ee" stroke-width="1"/>
    <text x="287.8" y="197.8" font-size="12.400" letter-spacing=".35" fill="#7f869e" text-anchor="middle">2020年</text>
    <path d="M388.5 181.5v5" stroke="#e4e7ee" stroke-width="1"/>
    <text x="388.55" y="197.8" font-size="12.400" letter-spacing=".35" fill="#7f869e" text-anchor="middle">2021年</text>
    <path d="M489.5 181.5v5" stroke="#e4e7ee" stroke-width="1"/>
    <text x="489.3" y="197.8" font-size="12.400" letter-spacing=".35" fill="#7f869e" text-anchor="middle">2022年</text>
    <path d="M590.5 181.5v5" stroke="#e4e7ee" stroke-width="1"/>
    <text x="590.05" y="197.8" font-size="12.400" letter-spacing=".35" fill="#7f869e" text-anchor="middle">2023年</text>
    <path d="M690.5 181.5v5" stroke="#e4e7ee" stroke-width="1"/>
    <text x="690.8" y="197.8" font-size="12.400" letter-spacing=".35" fill="#7f869e" text-anchor="middle">2024年</text>
    <path d="M86.3 108.5 L187.05 145.5 L287.8 72.5 L388.55 72.5 L489.3 36.5 L590.05 36.5 L690.8 72.5 L690.8 181.5 L86.3 181.5 Z" fill="url(#ag)"/>
    <path d="M86.3 108.5 L187.05 145.5 L287.8 72.5 L388.55 72.5 L489.3 36.5 L590.05 36.5 L690.8 72.5" fill="none" stroke="#1e90ff" stroke-width="2" stroke-linejoin="round"/>
    <circle cx="86.3" cy="108.5" r="1.800" fill="#fff" stroke="#1e90ff" stroke-width="1"/>
    <text x="86.3" y="98.3" font-size="12" fill="#1e90ff" text-anchor="middle">2</text>
    <circle cx="187.05" cy="145.5" r="1.800" fill="#fff" stroke="#1e90ff" stroke-width="1"/>
    <text x="187.05" y="135.3" font-size="12" fill="#1e90ff" text-anchor="middle">1</text>
    <circle cx="287.8" cy="72.5" r="1.800" fill="#fff" stroke="#1e90ff" stroke-width="1"/>
    <text x="287.8" y="62.3" font-size="12" fill="#1e90ff" text-anchor="middle">3</text>
    <circle cx="388.55" cy="72.5" r="1.800" fill="#fff" stroke="#1e90ff" stroke-width="1"/>
    <text x="388.55" y="62.3" font-size="12" fill="#1e90ff" text-anchor="middle">3</text>
    <circle cx="489.3" cy="36.5" r="1.800" fill="#fff" stroke="#1e90ff" stroke-width="1"/>
    <text x="489.3" y="26.3" font-size="12" fill="#1e90ff" text-anchor="middle">4</text>
    <circle cx="590.05" cy="36.5" r="1.800" fill="#fff" stroke="#1e90ff" stroke-width="1"/>
    <text x="590.05" y="26.3" font-size="12" fill="#1e90ff" text-anchor="middle">4</text>
    <circle cx="690.8" cy="72.5" r="1.800" fill="#fff" stroke="#1e90ff" stroke-width="1"/>
    <text x="690.8" y="62.3" font-size="12" fill="#1e90ff" text-anchor="middle">3</text>
  </svg>
  </div>
  <div class="abs" id="msrc">数据来源：<span>历年企业年报</span></div>
</div>

</body>
</html>
